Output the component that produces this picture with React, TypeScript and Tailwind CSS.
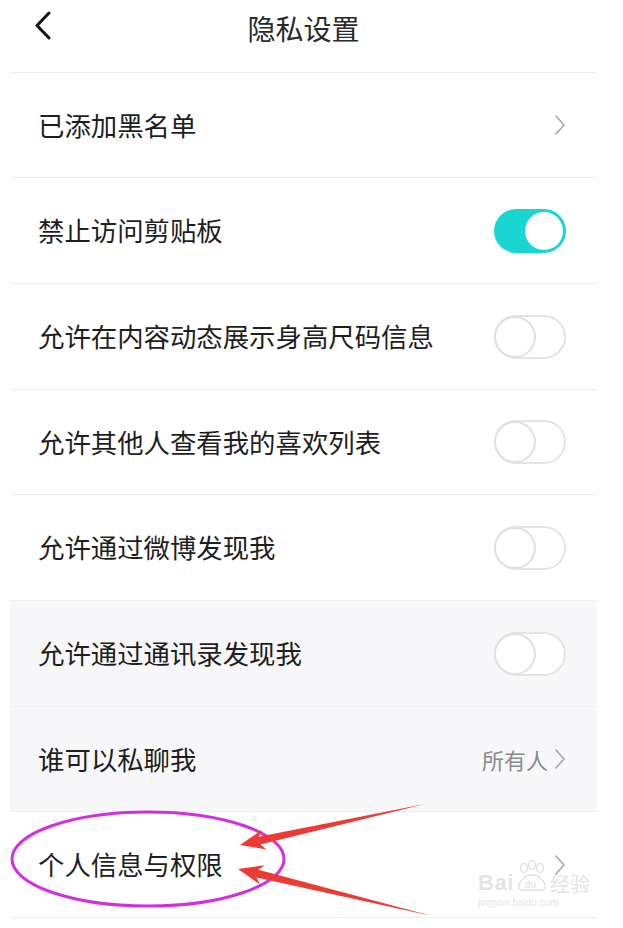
import React from 'react';

type Row = {
  label: string;
  kind: 'link' | 'on' | 'off';
  value?: string;
  gray?: boolean;
  h: string;
};

const rows: Row[] = [
  { label: '已添加黑名单', kind: 'link', h: 'h-[105px]' },
  { label: '禁止访问剪贴板', kind: 'on', h: 'h-[106px]' },
  { label: '允许在内容动态展示身高尺码信息', kind: 'off', h: 'h-[106px]' },
  { label: '允许其他人查看我的喜欢列表', kind: 'off', h: 'h-[105px]' },
  { label: '允许通过微博发现我', kind: 'off', h: 'h-[106px]' },
  { label: '允许通过通讯录发现我', kind: 'off', gray: true, h: 'h-[106px]' },
  { label: '谁可以私聊我', kind: 'link', value: '所有人', gray: true, h: 'h-[105px]' },
  { label: '个人信息与权限', kind: 'link', h: 'h-[106px]' },
];

const Chevron = () => (
  <svg width="12" height="22" viewBox="0 0 12 22" fill="none">
    <path d="M2 2 L10 11 L2 20" stroke="#a8a8a8" strokeWidth="1.6" strokeLinecap="round" strokeLinejoin="round" />
  </svg>
);

const Toggle = ({ on }: { on: boolean }) =>
  on ? (
    <div className="w-[72px] h-[44px] rounded-full bg-[#19d6d1] flex items-center justify-end pr-[3px]">
      <div className="w-[38px] h-[38px] rounded-full bg-white" />
    </div>
  ) : (
    <div className="w-[72px] h-[44px] rounded-full border-2 border-[#e4e4e4] bg-white flex items-center">
      <div className="w-[42px] h-[42px] -ml-[2px] rounded-full border-2 border-[#e0e0e0] bg-white" />
    </div>
  );

const SettingRow = ({ row }: { row: Row }) => (
  <div
    className={`${row.h} flex items-center justify-between pl-[28px] pr-[31px] border-t border-[#efefef] ${
      row.gray ? 'bg-[#f7f7f9]' : 'bg-white'
    }`}
  >
    <span className="text-[26.4px] text-[#1e1e1e] leading-none">{row.label}</span>
    {row.kind === 'link' ? (
      <div className="flex items-center gap-[6px]">
        {row.value && <span className="text-[22px] text-[#8a8a8a] leading-none">{row.value}</span>}
        <Chevron />
      </div>
    ) : (
      <Toggle on={row.kind === 'on'} />
    )}
  </div>
);

export default function App() {
  return (
    <div
      className="relative w-[623px] h-[928px] bg-white overflow-hidden"
      style={{ fontFamily: '"Noto Sans CJK SC", "Noto Sans", sans-serif' }}
    >
      <header className="h-[72px] w-[587px] ml-[10px] flex items-start">
        <div className="relative w-full h-[56px] flex items-center justify-center">
          <svg className="absolute left-[24px] top-[11px]" width="18" height="30" viewBox="0 0 18 30" fill="none">
            <path d="M15 2 L3 14.5 L15 27" stroke="#111" strokeWidth="3" strokeLinecap="round" strokeLinejoin="round" />
          </svg>
          <h1 className="text-[28px] text-[#2a2a2a] font-normal leading-none">隐私设置</h1>
        </div>
      </header>

      <div className="w-[587px] ml-[10px] border-b border-[#efefef]">
        {rows.map((r) => (
          <SettingRow key={r.label} row={r} />
        ))}
      </div>

      {/* baidu watermark */}
      <div className="absolute left-[478px] top-[860px] pointer-events-none flex flex-col items-start">
        <div className="flex items-end gap-[2px]">
          <span className="text-[22px] leading-none text-[#e4e4e4] font-bold tracking-wide" style={{ fontFamily: '"Liberation Sans", sans-serif' }}>
            Bai
          </span>
          <svg width="32" height="34" viewBox="0 0 32 34" fill="none" stroke="#e0e0e0" strokeWidth="1.4">
            <ellipse cx="8" cy="8" rx="3.5" ry="4.5" />
            <ellipse cx="16" cy="5" rx="3.5" ry="4.5" />
            <ellipse cx="24" cy="8" rx="3.5" ry="4.5" />
            <path d="M6 30 C1 30 2 22 8 18 C12 14 20 14 24 18 C30 22 31 30 26 30 Z" />
            <text x="9" y="28" fontSize="10" fill="#e0e0e0" stroke="none" fontFamily="Liberation Sans, sans-serif">du</text>
          </svg>
          <span className="text-[20px] leading-none text-[#e4e4e4]">经验</span>
        </div>
        <span className="text-[10px] leading-none mt-[4px] text-[#e6e6e6]" style={{ fontFamily: '"Liberation Sans", sans-serif' }}>
          jingyan.baidu.com
        </span>
      </div>

      {/* annotation overlay */}
      <svg className="absolute inset-0 pointer-events-none" width="623" height="928" viewBox="0 0 623 928">
        <ellipse cx="148" cy="859" rx="136" ry="47" fill="none" stroke="#d22fe0" strokeWidth="3" />
        <polygon
          points="240,845 266.6,849.4 260.4,844.6 425,804 258.6,836.8 262.2,829.8"
          fill="#ec3b35"
        />
        <polygon
          points="238,869 259.9,884.6 256.5,877.6 432,916 258.3,869.8 264.6,865.2"
          fill="#ec3b35"
        />
      </svg>
    </div>
  );
}
